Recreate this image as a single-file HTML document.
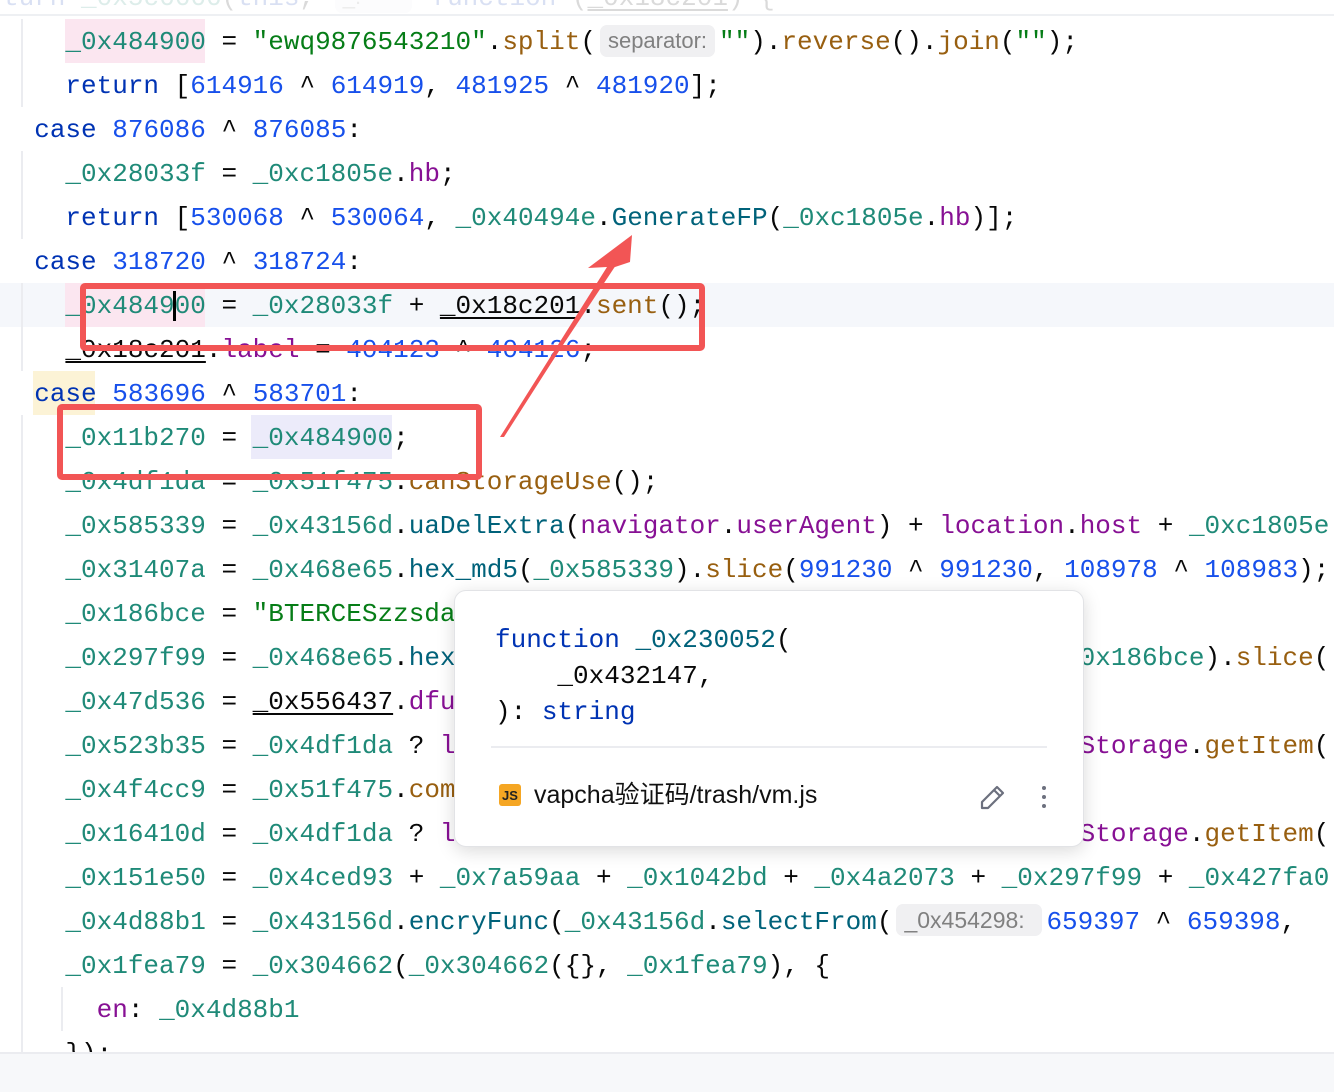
<!DOCTYPE html>
<html><head><meta charset="utf-8"><style>
html,body{margin:0;padding:0;background:#fff;width:1334px;height:1092px;overflow:hidden;position:relative}
.code{position:absolute;left:3px;font-family:"Liberation Mono",monospace;font-size:26px;line-height:44px;height:44px;white-space:pre;color:#080808;letter-spacing:0;margin-top:1px}
.v{color:#1f8a78}.k{color:#0033b3}.n{color:#1750eb}.s{color:#067d17}.m{color:#985f10}.f{color:#00627a}.p{color:#871094}
.u{text-decoration:underline;text-underline-offset:4px;color:#080808}
.hint{display:inline-block;font-family:"Liberation Sans",sans-serif;font-size:22px;color:#808080;background:#f0f0f2;border-radius:7px;line-height:32px;padding:0 8px;vertical-align:1px;margin:0 4px}
.guide{position:absolute;width:2px;background:#ebecf0}
</style></head><body>

<div style="position:absolute;left:0;top:283px;width:1334px;height:44px;background:#f5f7fb"></div>

<div class="guide" style="left:21px;top:19px;height:88px"></div>
<div class="guide" style="left:21px;top:151px;height:88px"></div>
<div class="guide" style="left:21px;top:283px;height:88px"></div>
<div class="guide" style="left:21px;top:415px;height:640px"></div>
<div class="guide" style="left:61px;top:987px;height:44px"></div>

<div style="position:absolute;left:65px;top:19px;width:140px;height:44px;background:#fbe6f0"></div>
<div style="position:absolute;left:65px;top:283px;width:140px;height:44px;background:#fbe6f0"></div>
<div style="position:absolute;left:33px;top:371px;width:62px;height:44px;background:#fcf3d6"></div>
<div style="position:absolute;left:251px;top:415px;width:141px;height:44px;background:#ecebfa"></div>

<div class="code" style="top:-25px"><span class="k">turn</span> <span class="v">_0x5c6666</span>(<span class="k">this</span>, <span class="hint">_: &nbsp;&nbsp;&nbsp;&nbsp;&nbsp;&nbsp;</span> <span class="k">function</span> (<span class="u">_0x18c201</span>) {</div>
<div style="position:absolute;left:0;top:0;width:1334px;height:14px;background:#fff;border-bottom:2px solid #eceef2;opacity:.85"></div>

<div class="code" style="top:19px">    <span class="v">_0x484900</span> = <span class="s">"ewq9876543210"</span>.<span class="m">split</span>(<span class="hint">separator:</span><span class="s">""</span>).<span class="m">reverse</span>().<span class="m">join</span>(<span class="s">""</span>);</div>
<div class="code" style="top:63px">    <span class="k">return</span> [<span class="n">614916</span> ^ <span class="n">614919</span>, <span class="n">481925</span> ^ <span class="n">481920</span>];</div>
<div class="code" style="top:107px">  <span class="k">case</span> <span class="n">876086</span> ^ <span class="n">876085</span>:</div>
<div class="code" style="top:151px">    <span class="v">_0x28033f</span> = <span class="v">_0xc1805e</span>.<span class="p">hb</span>;</div>
<div class="code" style="top:195px">    <span class="k">return</span> [<span class="n">530068</span> ^ <span class="n">530064</span>, <span class="v">_0x40494e</span>.<span class="f">GenerateFP</span>(<span class="v">_0xc1805e</span>.<span class="p">hb</span>)];</div>
<div class="code" style="top:239px">  <span class="k">case</span> <span class="n">318720</span> ^ <span class="n">318724</span>:</div>
<div class="code" style="top:283px">    <span class="v">_0x484900</span> = <span class="v">_0x28033f</span> + <span class="u">_0x18c201</span>.<span class="m">sent</span>();</div>
<div style="position:absolute;left:173px;top:291px;width:3px;height:30px;background:#000"></div>
<div class="code" style="top:327px">    <span class="u">_0x18c201</span>.<span class="p">label</span> = <span class="n">404123</span> ^ <span class="n">404126</span>;</div>
<div class="code" style="top:371px">  <span class="k">case</span> <span class="n">583696</span> ^ <span class="n">583701</span>:</div>
<div class="code" style="top:415px">    <span class="v">_0x11b270</span> = <span class="v">_0x484900</span>;</div>
<div class="code" style="top:459px">    <span class="v">_0x4df1da</span> = <span class="v">_0x51f475</span>.<span class="m">canStorageUse</span>();</div>
<div class="code" style="top:503px">    <span class="v">_0x585339</span> = <span class="v">_0x43156d</span>.<span class="f">uaDelExtra</span>(<span class="p">navigator</span>.<span class="p">userAgent</span>) + <span class="p">location</span>.<span class="p">host</span> + <span class="v">_0xc1805e</span>.</div>
<div class="code" style="top:547px">    <span class="v">_0x31407a</span> = <span class="v">_0x468e65</span>.<span class="f">hex_md5</span>(<span class="v">_0x585339</span>).<span class="m">slice</span>(<span class="n">991230</span> ^ <span class="n">991230</span>, <span class="n">108978</span> ^ <span class="n">108983</span>);</div>
<div class="code" style="top:591px">    <span class="v">_0x186bce</span> = <span class="s">"BTERCESzzsda</span></div>
<div class="code" style="top:635px">    <span class="v">_0x297f99</span> = <span class="v">_0x468e65</span>.<span class="f">hex</span>                                       <span class="v">_0x186bce</span>).<span class="m">slice</span>(</div>
<div class="code" style="top:679px">    <span class="v">_0x47d536</span> = <span class="u">_0x556437</span>.<span class="p">dfu</span></div>
<div class="code" style="top:723px">    <span class="v">_0x523b35</span> = <span class="v">_0x4df1da</span> ? <span class="p">l</span>                                        <span class="p">Storage</span>.<span class="m">getItem</span>('</div>
<div class="code" style="top:767px">    <span class="v">_0x4f4cc9</span> = <span class="v">_0x51f475</span>.<span class="m">com</span></div>
<div class="code" style="top:811px">    <span class="v">_0x16410d</span> = <span class="v">_0x4df1da</span> ? <span class="p">l</span>                                        <span class="p">Storage</span>.<span class="m">getItem</span>('</div>
<div class="code" style="top:855px">    <span class="v">_0x151e50</span> = <span class="v">_0x4ced93</span> + <span class="v">_0x7a59aa</span> + <span class="v">_0x1042bd</span> + <span class="v">_0x4a2073</span> + <span class="v">_0x297f99</span> + <span class="v">_0x427fa0</span></div>
<div class="code" style="top:899px">    <span class="v">_0x4d88b1</span> = <span class="v">_0x43156d</span>.<span class="f">encryFunc</span>(<span class="v">_0x43156d</span>.<span class="f">selectFrom</span>(<span class="hint" style="width:130px;padding:0 8px;font-size:23px">_0x454298:</span><span class="n">659397</span> ^ <span class="n">659398</span>,</div>
<div class="code" style="top:943px">    <span class="v">_0x1fea79</span> = <span class="v">_0x304662</span>(<span class="v">_0x304662</span>({}, <span class="v">_0x1fea79</span>), {</div>
<div class="code" style="top:987px">      <span class="p">en</span>: <span class="v">_0x4d88b1</span></div>
<div class="code" style="top:1031px">    });</div>

<div style="position:absolute;left:0;top:1052px;width:1334px;height:40px;background:#f7f8fa;border-top:2px solid #ebecf0"></div>

<div style="position:absolute;left:454px;top:590px;width:628px;height:255px;background:#fff;border:1px solid #e2e3e6;border-radius:12px;box-shadow:0 4px 18px rgba(0,0,0,.15)">
  <div style="position:absolute;left:40px;top:31px;font-family:'Liberation Mono',monospace;font-size:26px;line-height:36px;white-space:pre;color:#080808"><span class="k">function</span> <span style="color:#00627a">_0x230052</span>(
    _0x432147,
): <span class="k">string</span></div>
  <div style="position:absolute;left:36px;top:155px;width:556px;height:2px;background:#ebecf0"></div>
  <div style="position:absolute;left:44px;top:193px;width:22px;height:22px;background:#f5a623;border-radius:3px;font-family:'Liberation Sans',sans-serif;font-size:13px;font-weight:bold;line-height:23px;text-align:center;color:#222">JS</div>
  <div style="position:absolute;left:79px;top:187px;font-family:'Liberation Sans','Noto Sans CJK SC',sans-serif;font-size:25px;line-height:34px;color:#111">vapcha验证码/trash/vm.js</div>
  <svg style="position:absolute;left:524px;top:192px" width="28" height="28" viewBox="0 0 28 28"><path d="M3 25 L3 19 L18 4 L24 10 L9 25 Z M15 7 L21 13" fill="none" stroke="#6c707e" stroke-width="2.2" stroke-linejoin="round"/></svg>
  <div style="position:absolute;left:587px;top:195px;width:4px;height:4px;border-radius:2px;background:#6c707e;box-shadow:0 9px 0 #6c707e,0 18px 0 #6c707e"></div>
</div>

<svg style="position:absolute;left:0;top:0" width="1334" height="1092">
  <rect x="83" y="286" width="619" height="62" fill="none" stroke="#f25555" stroke-width="6" rx="2"/>
  <rect x="60" y="407" width="419" height="70" fill="none" stroke="#f25555" stroke-width="6" rx="2"/>
  <polygon points="500,437 504,437 612,268 630,262 632,235 588,268 607,267" fill="#f25555"/>
  <polygon points="502,437 614,258 618,262" fill="#f25555"/>
</svg>
</body></html>
